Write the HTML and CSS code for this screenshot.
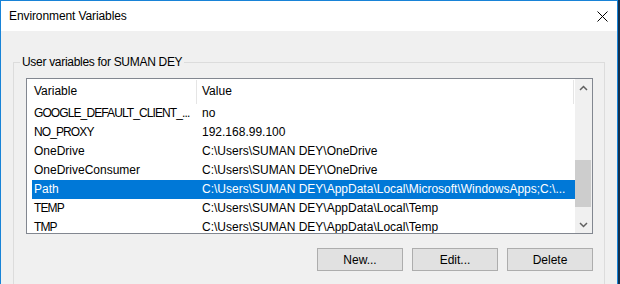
FILE: index.html
```html
<!DOCTYPE html>
<html lang="en">
<head>
  <meta charset="UTF-8">
  <title>Environment Variables</title>
  <link rel="stylesheet" href="styles.css">
</head>
<body>
<div class="window">
  <div class="titlebar">
    <span class="title">Environment Variables</span>
    <svg class="close" width="11" height="11" viewBox="0 0 11 11">
      <path d="M0.5 0.5 L10.5 10.5 M10.5 0.5 L0.5 10.5" stroke="#000" stroke-width="1" fill="none"/>
    </svg>
  </div>
  <div class="content">
    <fieldset class="group">
      <legend>User variables for SUMAN DEY</legend>
      <div class="listview">
        <div class="lv-main">
          <div class="lv-header">
            <div class="hcol col1">Variable</div>
            <div class="hcol col2">Value</div>
          </div>
          <div class="row"><div class="col1 upper">GOOGLE_DEFAULT_CLIENT_...</div><div class="col2">no</div></div>
          <div class="row"><div class="col1 upper">NO_PROXY</div><div class="col2">192.168.99.100</div></div>
          <div class="row"><div class="col1">OneDrive</div><div class="col2">C:\Users\SUMAN DEY\OneDrive</div></div>
          <div class="row"><div class="col1">OneDriveConsumer</div><div class="col2">C:\Users\SUMAN DEY\OneDrive</div></div>
          <div class="row selected"><div class="col1">Path</div><div class="col2">C:\Users\SUMAN DEY\AppData\Local\Microsoft\WindowsApps;C:\...</div></div>
          <div class="row"><div class="col1 upper">TEMP</div><div class="col2">C:\Users\SUMAN DEY\AppData\Local\Temp</div></div>
          <div class="row"><div class="col1 upper">TMP</div><div class="col2">C:\Users\SUMAN DEY\AppData\Local\Temp</div></div>
        </div>
        <div class="scrollbar">
          <div class="sb-btn">
            <svg width="9" height="6" viewBox="0 0 9 6"><path d="M1 5 L4.5 1.5 L8 5" stroke="#606060" stroke-width="1.5" fill="none"/></svg>
          </div>
          <div class="sb-track"><div class="sb-thumb"></div></div>
          <div class="sb-btn">
            <svg width="9" height="6" viewBox="0 0 9 6"><path d="M1 1 L4.5 4.5 L8 1" stroke="#606060" stroke-width="1.5" fill="none"/></svg>
          </div>
        </div>
      </div>
      <div class="buttons">
        <button class="btn">New...</button>
        <button class="btn">Edit...</button>
        <button class="btn">Delete</button>
      </div>
    </fieldset>
  </div>
</div>
</body>
</html>
```

FILE: styles.css
```css
* {
  margin: 0;
  padding: 0;
  box-sizing: border-box;
}

body {
  background: #12304e;
  font-family: "Liberation Sans", Arial, sans-serif;
  font-size: 12px;
  color: #000;
  overflow: hidden;
}

.window {
  width: 618px;
  height: 284px;
  border: 1px solid #1883d7;
  border-bottom: 0;
  background: #f0f0f0;
  overflow: hidden;
}

.titlebar {
  height: 30px;
  background: #fff;
  display: flex;
  align-items: center;
  justify-content: space-between;
  padding: 0 9px 0 8px;
}

.title {
  line-height: 16px;
  letter-spacing: -0.1px;
}

.close {
  display: block;
}

.content {
  padding: 23px 12px 0;
}

.group {
  width: 592px;
  height: 250px;
  border: 1px solid #dcdcdc;
  padding: 7px 11px 0 12px;
}

.group legend {
  margin-left: -6px;
  padding: 0 2px;
  line-height: 17px;
  letter-spacing: -0.3px;
}

.listview {
  display: flex;
  height: 156px;
  border: 1px solid #828790;
  background: #fff;
}

.lv-main {
  flex: 1;
  padding-left: 5px;
  overflow: hidden;
}

.lv-header {
  display: flex;
  height: 25px;
}

.hcol {
  margin-top: 1px;
  height: 24px;
  line-height: 23px;
  border-right: 1px solid #e5e5e5;
}

.col1 {
  width: 165px;
  flex-shrink: 0;
  padding-left: 2px;
  white-space: nowrap;
  overflow: hidden;
}

.col1.upper {
  letter-spacing: -0.9px;
}

.hcol.col2 {
  width: 377px;
  padding-left: 5px;
}

.row {
  display: flex;
  height: 19px;
  line-height: 19px;
  white-space: nowrap;
}

.row .col2 {
  flex: 1;
  padding-left: 5px;
  overflow: hidden;
}

.row.selected {
  background: #0078d7;
  color: #fff;
}

.scrollbar {
  width: 17px;
  background: #f0f0f0;
  display: flex;
  flex-direction: column;
}

.sb-btn {
  height: 17px;
  display: flex;
  align-items: center;
  justify-content: center;
}

.sb-btn svg {
  display: block;
}

.sb-track {
  flex: 1;
}

.sb-thumb {
  margin: 64px 1px 0 0;
  height: 47px;
  background: #cdcdcd;
}

.buttons {
  display: flex;
  justify-content: flex-end;
  gap: 9px;
  margin-top: 14px;
}

.btn {
  width: 86px;
  height: 23px;
  border: 1px solid #adadad;
  background: #e1e1e1;
  font: inherit;
  color: #000;
}
```
